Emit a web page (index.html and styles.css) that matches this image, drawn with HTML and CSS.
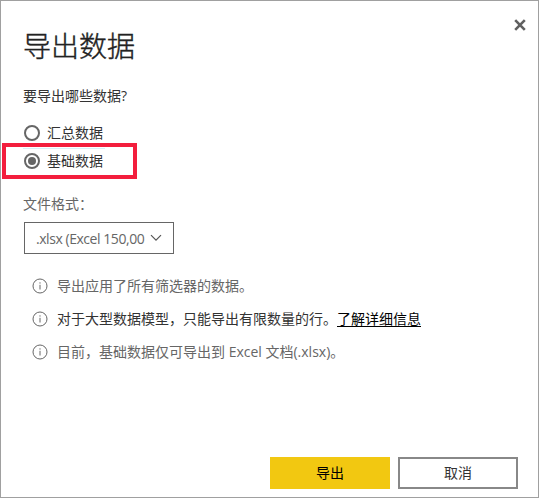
FILE: index.html
```html
<!DOCTYPE html>
<html lang="zh-CN">
<head>
<meta charset="utf-8">
<title>导出数据</title>
<link rel="stylesheet" href="styles.css">
</head>
<body>
<main class="dialog">
  <button class="close" aria-label="关闭"><svg width="12" height="12" viewBox="0 0 12 12"><path d="M1.2 1.2l9.6 9.6M10.8 1.2l-9.6 9.6"/></svg></button>
  <h1 class="title">导出数据</h1>
  <p class="question">要导出哪些数据?</p>
  <div class="options">
    <label class="option"><span class="radio"></span>汇总数据</label>
    <label class="option selected"><span class="radio checked"></span>基础数据</label>
    <div class="highlight"></div>
  </div>
  <p class="format-label">文件格式：</p>
  <div class="select"><span class="value">.xlsx (Excel 150,00</span><svg class="chevron" width="12" height="8" viewBox="0 0 12 8"><path d="M1 1.2l5 5 5-5"/></svg></div>
  <ul class="notes">
    <li class="note"><svg class="info" width="16" height="16" viewBox="0 0 16 16"><circle cx="8" cy="8" r="7"/><path d="M8 6.8v4.7M8 4.3v1.3"/></svg><span>导出应用了所有筛选器的数据。</span></li>
    <li class="note dark"><svg class="info" width="16" height="16" viewBox="0 0 16 16"><circle cx="8" cy="8" r="7"/><path d="M8 6.8v4.7M8 4.3v1.3"/></svg><span>对于大型数据模型，只能导出有限数量的行。<a class="link">了解详细信息</a></span></li>
    <li class="note"><svg class="info" width="16" height="16" viewBox="0 0 16 16"><circle cx="8" cy="8" r="7"/><path d="M8 6.8v4.7M8 4.3v1.3"/></svg><span>目前，基础数据仅可导出到 Excel 文档(.xlsx)。</span></li>
  </ul>
  <footer class="actions">
    <button class="button primary">导出</button>
    <button class="button secondary">取消</button>
  </footer>
</main>
</body>
</html>
```

FILE: styles.css
```css
* { box-sizing: border-box; }
body { margin: 0; background: #fff; font-family: "Open Sans", "Noto Sans CJK SC", sans-serif; font-size: 14px; line-height: 20px; color: #333; }
h1, p, ul { margin: 0; padding: 0; }
button { font: inherit; padding: 0; }
svg { display: block; fill: none; flex: none; }
.dialog { position: relative; display: flex; flex-direction: column; width: 539px; height: 498px; padding: 25px 20px 8px 22px; border: 1px solid #a0a0a0; overflow: hidden; }
.close { position: absolute; top: 18px; right: 12px; border: 0; background: none; }
.close svg { stroke: #606060; stroke-width: 2.6; }
.title { font-size: 28px; line-height: 40px; font-weight: 300; color: #222; -webkit-text-stroke: 0.4px #222; }
.question { margin-top: 20px; }
.options { position: relative; margin-top: 12px; }
.option { display: flex; align-items: center; gap: 7px; height: 30px; padding-left: 1px; }
.radio { display: flex; align-items: center; justify-content: center; width: 16px; height: 16px; border: 2px solid #666; border-radius: 50%; }
.radio.checked::after { content: ""; width: 8px; height: 8px; border-radius: 50%; background: #666; }
.selected { width: 82px; height: 25px; border-top: 1px solid #d8eef8; }
.highlight { position: absolute; left: -21px; top: 25px; width: 135px; height: 36px; border: 4px solid #f31e3d; }
.format-label { margin-top: 21px; color: #666; }
.select { display: flex; align-items: center; width: 150px; height: 32px; margin: 8px 0 0 1px; padding: 2px 11px 0; border: 1px solid #666; color: #666; }
.value { width: 110px; white-space: nowrap; letter-spacing: -0.45px; }
.chevron { margin: -2px 0 0 4px; stroke: #555; stroke-width: 1.2; }
.notes { list-style: none; margin: 15px 0 0 9px; }
.note { display: flex; align-items: center; gap: 9px; height: 33px; color: #666; white-space: nowrap; }
.info { stroke: #666; stroke-width: 1; }
.dark { color: #333; }
.link { color: #000; text-decoration: underline; text-underline-offset: 2px; }
.actions { display: flex; justify-content: flex-end; gap: 8px; margin-top: auto; }
.button { width: 120px; height: 32px; border: 0; }
.primary { background: #f2c811; color: #000; }
.secondary { border: 2px solid #888; background: #fff; color: #333; }
```
